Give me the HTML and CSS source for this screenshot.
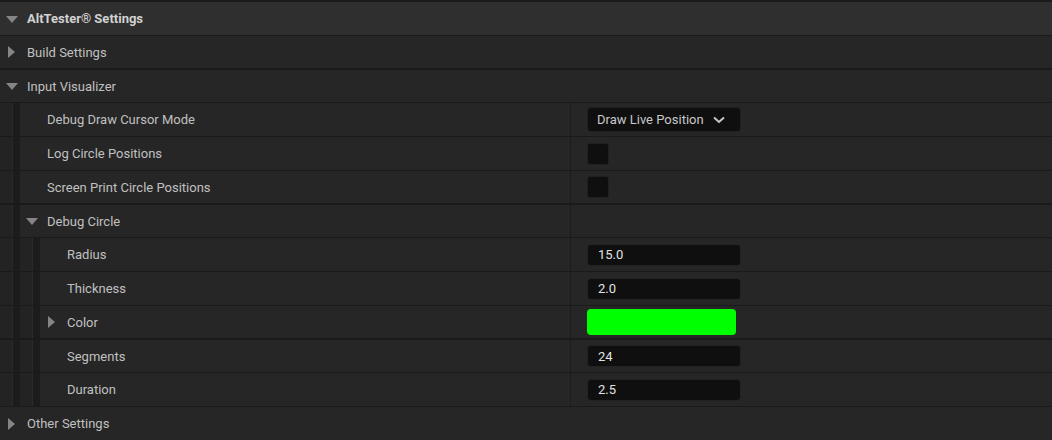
FILE: index.html
```html
<!DOCTYPE html>
<html lang="en">
  <head>
    <meta charset="UTF-8" />
    <title>AltTester Settings</title>
    <link rel="stylesheet" href="styles.css">
  </head>
  <body>
    <div class="panel">
      <div class="row category">
        <div class="name">
          <span class="toggle"><svg viewBox="0 0 12 12"><polygon points="0,3 12,3 6,10" /></svg></span>
          <span class="label">AltTester® Settings</span>
        </div>
      </div>
      <div class="row group thick">
        <div class="name">
          <span class="toggle"><svg viewBox="0 0 12 12"><polygon points="2,0 9,6 2,12" /></svg></span>
          <span class="label">Build Settings</span>
        </div>
      </div>
      <div class="row group short">
        <div class="name">
          <span class="toggle"><svg viewBox="0 0 12 12"><polygon points="0,3 12,3 6,10" /></svg></span>
          <span class="label">Input Visualizer</span>
        </div>
      </div>

      <div class="row prop">
        <div class="name">
          <span class="indent"></span><span class="toggle"></span>
          <span class="label">Debug Draw Cursor Mode</span>
        </div>
        <div class="value">
          <div class="combo">
            Draw Live Position
            <svg viewBox="0 0 12 8"><polyline points="1,1.5 6,6 11,1.5" /></svg>
          </div>
        </div>
      </div>
      <div class="row prop">
        <div class="name">
          <span class="indent"></span><span class="toggle"></span>
          <span class="label">Log Circle Positions</span>
        </div>
        <div class="value"><span class="check"></span></div>
      </div>
      <div class="row prop thick">
        <div class="name">
          <span class="indent"></span><span class="toggle"></span>
          <span class="label">Screen Print Circle Positions</span>
        </div>
        <div class="value"><span class="check"></span></div>
      </div>
      <div class="row prop short">
        <div class="name">
          <span class="indent"></span>
          <span class="toggle"><svg viewBox="0 0 12 12"><polygon points="0,3 12,3 6,10" /></svg></span>
          <span class="label">Debug Circle</span>
        </div>
        <div class="value"></div>
      </div>

      <div class="row prop">
        <div class="name">
          <span class="indent"></span><span class="indent"></span><span class="toggle"></span>
          <span class="label">Radius</span>
        </div>
        <div class="value"><div class="field">15.0</div></div>
      </div>
      <div class="row prop">
        <div class="name">
          <span class="indent"></span><span class="indent"></span><span class="toggle"></span>
          <span class="label">Thickness</span>
        </div>
        <div class="value"><div class="field">2.0</div></div>
      </div>
      <div class="row prop thick">
        <div class="name">
          <span class="indent"></span><span class="indent"></span>
          <span class="toggle"><svg viewBox="0 0 12 12"><polygon points="2,0 9,6 2,12" /></svg></span>
          <span class="label">Color</span>
        </div>
        <div class="value"><div class="swatch" style="background-color: #00ff00"></div></div>
      </div>
      <div class="row prop short">
        <div class="name">
          <span class="indent"></span><span class="indent"></span><span class="toggle"></span>
          <span class="label">Segments</span>
        </div>
        <div class="value"><div class="field">24</div></div>
      </div>
      <div class="row prop">
        <div class="name">
          <span class="indent"></span><span class="indent"></span><span class="toggle"></span>
          <span class="label">Duration</span>
        </div>
        <div class="value"><div class="field">2.5</div></div>
      </div>

      <div class="row group">
        <div class="name">
          <span class="toggle"><svg viewBox="0 0 12 12"><polygon points="2,0 9,6 2,12" /></svg></span>
          <span class="label">Other Settings</span>
        </div>
      </div>
    </div>
  </body>
</html>
```

FILE: styles.css
```css
body {
  margin: 0;
  background-color: #262626;
  font-family: Roboto, "Liberation Sans", sans-serif;
  font-size: 13px;
  color: #c0c0c0;
  overflow: hidden;
}
.panel {
  border-top: 2px solid #1b1b1b;
}
.row {
  display: grid;
  grid-template-columns: 571px 1fr;
  height: 34px;
  box-sizing: border-box;
  border-bottom: 1px solid #1a1a1a;
  background-color: #262626;
}
.row.short {
  height: 33px;
}
.row.thick {
  border-bottom-width: 2px;
}
.category {
  background-color: #2f2f2f;
}
.category .label {
  font-weight: bold;
  color: #d2d2d2;
}
.name {
  display: flex;
  align-items: stretch;
  min-width: 0;
}
.prop .name {
  border-right: 1px solid #1c1c1c;
}
.indent {
  flex: 0 0 20px;
  background: linear-gradient(to right, #232323 0 12px, #2b2b2b 12px 13px, #1c1c1c 13px 20px);
}
.toggle {
  flex: 0 0 27px;
  display: flex;
  align-items: center;
  padding-left: 6px;
  box-sizing: border-box;
}
.toggle svg {
  width: 12px;
  height: 12px;
  fill: #858585;
}
.label {
  display: flex;
  align-items: center;
  white-space: nowrap;
}
.value {
  display: flex;
  align-items: center;
  padding-left: 16px;
}
.combo {
  width: 154px;
  height: 25px;
  box-sizing: border-box;
  display: flex;
  align-items: center;
  justify-content: space-between;
  padding: 0 15px 0 9px;
  background-color: #0f0f0f;
  border: 1px solid #1f1f1f;
  border-radius: 4px;
  color: #c8c8c8;
}
.combo svg {
  width: 12px;
  height: 8px;
  fill: none;
  stroke: #c8c8c8;
  stroke-width: 2;
}
.check {
  width: 22px;
  height: 22px;
  box-sizing: border-box;
  background-color: #0f0f0f;
  border: 1px solid #202020;
  border-radius: 3px;
}
.field {
  width: 154px;
  height: 22px;
  box-sizing: border-box;
  display: flex;
  align-items: center;
  padding-left: 10px;
  background-color: #0f0f0f;
  border: 1px solid #222222;
  border-radius: 4px;
  color: #e2e2e2;
}
.swatch {
  width: 149px;
  height: 26px;
  border-radius: 4px;
}
```
